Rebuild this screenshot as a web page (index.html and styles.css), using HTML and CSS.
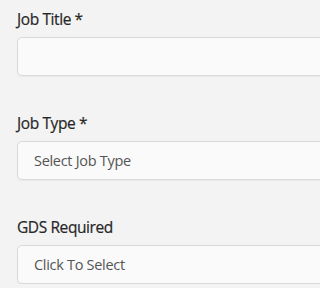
FILE: index.html
```html
<!DOCTYPE html>
<html>
<head>
<meta charset="utf-8">
<link rel="stylesheet" href="styles.css">
</head>
<body>
<form class="form">
  <div class="field">
    <label class="label">Job Title *</label>
    <div class="input"></div>
  </div>
  <div class="field">
    <label class="label">Job Type *</label>
    <div class="input"><span class="placeholder">Select Job Type</span></div>
  </div>
  <div class="field">
    <label class="label">GDS Required</label>
    <div class="input"><span class="placeholder">Click To Select</span></div>
  </div>
</form>
</body>
</html>
```
FILE: styles.css
```css
html, body {
  margin: 0;
  padding: 0;
  background: #f3f3f3;
  width: 100%;
  height: 100%;
  overflow: hidden;
}
.form {
  width: 100%;
  box-sizing: border-box;
  overflow: hidden;
  display: flex;
  flex-direction: column;
  gap: 37px;
  padding: 9px 0 0 17px;
  font-family: "Open Sans", "Noto Sans", sans-serif;
}
.field {
  display: flex;
  flex-direction: column;
  gap: 7px;
}
.label {
  font-size: 15.5px;
  line-height: 21px;
  font-weight: 500;
  color: #262626;
  letter-spacing: -0.4px;
  -webkit-text-stroke: 0.2px #262626;
}
.input {
  box-sizing: border-box;
  width: calc(100% + 20px);
  height: 39px;
  background: #fafafa;
  border: 1px solid #d9d9d9;
  border-radius: 5px;
  box-shadow: 0 1px 1px rgba(0,0,0,0.04);
  display: flex;
  align-items: center;
  padding-left: 16px;
}
.placeholder {
  font-size: 14.5px;
  color: #555;
  letter-spacing: -0.3px;
}
```
